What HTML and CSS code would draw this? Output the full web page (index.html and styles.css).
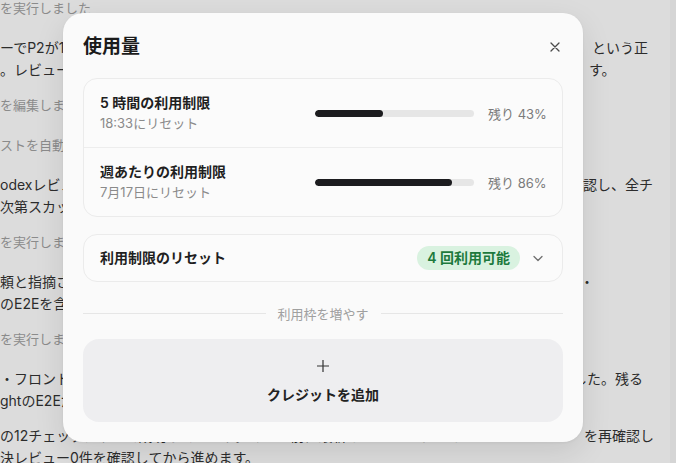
FILE: index.html
```html
<!DOCTYPE html>
<html lang="ja">
<head>
<meta charset="utf-8">
<title>使用量</title>
<link rel="stylesheet" href="styles.css">
</head>
<body>
<div class="screen">
  <main class="thread">
    <p class="note">を実行しました</p>
    <div class="msg">
      <div class="line"><span class="lead w592">ーでP2が1件指摘されたため、該当箇所を確認しました。原因は型定義の不一致だった</span><span>という正</span></div>
      <div class="line"><span class="lead w589">。レビューでの指摘内容を反映し、ブランチを更新してから再度チェックを回しま</span><span>す。</span></div>
    </div>
    <p class="note">を編集しました</p>
    <p class="note">ストを自動で実行しました</p>
    <div class="msg">
      <div class="line"><span class="lead w583">odexレビューの結果を待ちながら、変更点の差分とテストのログをあらためて確</span><span>認し、全チ</span></div>
      <div class="line">次第スカッシュしてマージする予定です。</div>
    </div>
    <p class="note">を実行しました</p>
    <div class="msg">
      <div class="line"><span class="lead w580">頼と指摘された内容をもとに、修正範囲を洗い出しました。対象はAPIとUIの二箇所で</span><span>・</span></div>
      <div class="line">のE2Eを含むすべてのテストを再実行しています。</div>
    </div>
    <p class="note">を実行しました</p>
    <div class="msg">
      <div class="line"><span class="lead w573">・フロントエンドの修正をコミットし、ユニットテストがすべて通ることを確認しま</span><span>した。残る</span></div>
      <div class="line">ghtのE2Eだけなので、完了次第報告します。</div>
    </div>
    <div class="msg">
      <div class="line"><span class="lead w584">の12チェックはすべて成功しています。マージ前に最新のレビューとPRのコメント</span><span>を再確認し</span></div>
      <div class="line">決レビュー0件を確認してから進めます。</div>
    </div>
  </main>
  <div class="scrollbar"></div>
</div>

<section class="dialog" role="dialog" aria-label="使用量">
  <header class="dialog-head">
    <h2>使用量</h2>
    <button class="icon-btn" aria-label="閉じる">
      <svg width="16" height="16" viewBox="0 0 16 16"><path d="M4 4L12 12M12 4L4 12" fill="none" stroke="#4a4a4a" stroke-width="1.3" stroke-linecap="round"/></svg>
    </button>
  </header>

  <div class="card">
    <div class="usage">
      <div>
        <div class="usage-title">5 時間の利用制限</div>
        <div class="usage-sub">18:33にリセット</div>
      </div>
      <div class="bar"><div class="bar-fill" style="width:43%"></div></div>
      <div class="pct">残り 43%</div>
    </div>
    <div class="usage">
      <div>
        <div class="usage-title">週あたりの利用制限</div>
        <div class="usage-sub">7月17日にリセット</div>
      </div>
      <div class="bar"><div class="bar-fill" style="width:86%"></div></div>
      <div class="pct">残り 86%</div>
    </div>
  </div>

  <div class="card reset">
    <span class="reset-title">利用制限のリセット</span>
    <span class="badge">4 回利用可能</span>
    <svg class="chev" width="16" height="16" viewBox="0 0 16 16"><path d="M4 6.5L8 10.5L12 6.5" fill="none" stroke="#6e6e6e" stroke-width="1.3" stroke-linecap="round" stroke-linejoin="round"/></svg>
  </div>

  <div class="divider"><span class="rule"></span><span class="divider-text">利用枠を増やす</span><span class="rule"></span></div>

  <button class="add-credit">
    <svg width="14" height="14" viewBox="0 0 14 14"><path d="M7 1V13M1 7H13" fill="none" stroke="#333" stroke-width="1.2"/></svg>
    <span>クレジットを追加</span>
  </button>
</section>
</body>
</html>
```
FILE: styles.css
```css
* { box-sizing: border-box; }

html, body {
  margin: 0;
  height: 100%;
}

body {
  background: #dcdcdc;
  font-family: "Inter", "Noto Sans CJK JP", sans-serif;
  overflow: hidden;
  position: relative;
}

/* dimmed conversation behind the dialog */
.screen {
  display: grid;
  grid-template-columns: 1fr 6px;
  height: 100vh;
}

.thread {
  margin-top: -3px;
  overflow: hidden;
  width: 660px;
}

.note {
  margin: 0 0 18px;
  font-size: 13px;
  line-height: 22px;
  color: #8b8b8b;
  white-space: nowrap;
}

.msg {
  margin-bottom: 13px;
  font-size: 14px;
  line-height: 22px;
  color: #2c2c2c;
}

.msg + .msg { margin-top: 5px; }

.line {
  display: flex;
  white-space: nowrap;
}

.lead {
  flex: none;
  overflow: hidden;
}

.w573 { width: 573px; }
.w580 { width: 580px; }
.w583 { width: 583px; }
.w584 { width: 584px; }
.w589 { width: 589px; }
.w592 { width: 592px; }

.scrollbar {
  background: #d5d5d5;
}

/* usage dialog */
.dialog {
  position: absolute;
  left: 63px;
  top: 13px;
  width: 520px;
  padding: 22px 20px 20px;
  background: #fafafa;
  border-radius: 20px;
  box-shadow: 0 10px 30px rgba(0, 0, 0, 0.10), 0 1px 3px rgba(0, 0, 0, 0.05);
}

.dialog-head {
  display: flex;
  align-items: center;
  justify-content: space-between;
  height: 24px;
}

.dialog-head h2 {
  margin: 0;
  font-size: 19px;
  line-height: 24px;
  font-weight: 700;
  color: #1b1b1b;
}

.icon-btn {
  display: flex;
  padding: 0;
  border: 0;
  background: none;
}

.card {
  margin-top: 19px;
  border: 1px solid #ebebeb;
  border-radius: 14px;
  background: #fbfbfb;
}

.usage {
  display: grid;
  grid-template-columns: 1fr 159px 58px;
  column-gap: 14px;
  align-items: center;
  padding: 14px 16px;
}

.usage + .usage {
  border-top: 1px solid #ededed;
}

.usage-title {
  font-size: 14px;
  line-height: 20px;
  font-weight: 600;
  color: #1f1f1f;
}

.usage-sub {
  font-size: 13px;
  line-height: 20px;
  color: #8a8a8a;
}

.bar {
  height: 7px;
  border-radius: 4px;
  background: #e6e6e6;
  overflow: hidden;
}

.bar-fill {
  height: 100%;
  border-radius: 4px;
  background: #1c1c1f;
}

.pct {
  font-size: 13px;
  color: #7b7b7b;
  white-space: nowrap;
}

.reset {
  margin-top: 17px;
  display: flex;
  align-items: center;
  gap: 10px;
  padding: 11px 16px;
}

.reset-title {
  flex: 1;
  font-size: 14px;
  line-height: 24px;
  font-weight: 600;
  color: #1f1f1f;
}

.badge {
  height: 24px;
  padding: 0 10px;
  border-radius: 12px;
  background: #d9f2e0;
  color: #1d7a3d;
  font-size: 14px;
  line-height: 24px;
  font-weight: 600;
}

.chev { flex: none; }

.divider {
  display: flex;
  align-items: center;
  gap: 12px;
  height: 20px;
  margin: 21px 0 16px;
}

.rule {
  flex: 1;
  height: 1px;
  background: #e6e6e6;
}

.divider-text {
  font-size: 13px;
  color: #a0a0a0;
}

.add-credit {
  display: flex;
  flex-direction: column;
  align-items: center;
  gap: 12px;
  width: 100%;
  padding: 20px 0 17px;
  border: 0;
  border-radius: 16px;
  background: #eeeef0;
  font: inherit;
}

.add-credit span {
  font-size: 14px;
  line-height: 20px;
  font-weight: 600;
  color: #222;
}
```
